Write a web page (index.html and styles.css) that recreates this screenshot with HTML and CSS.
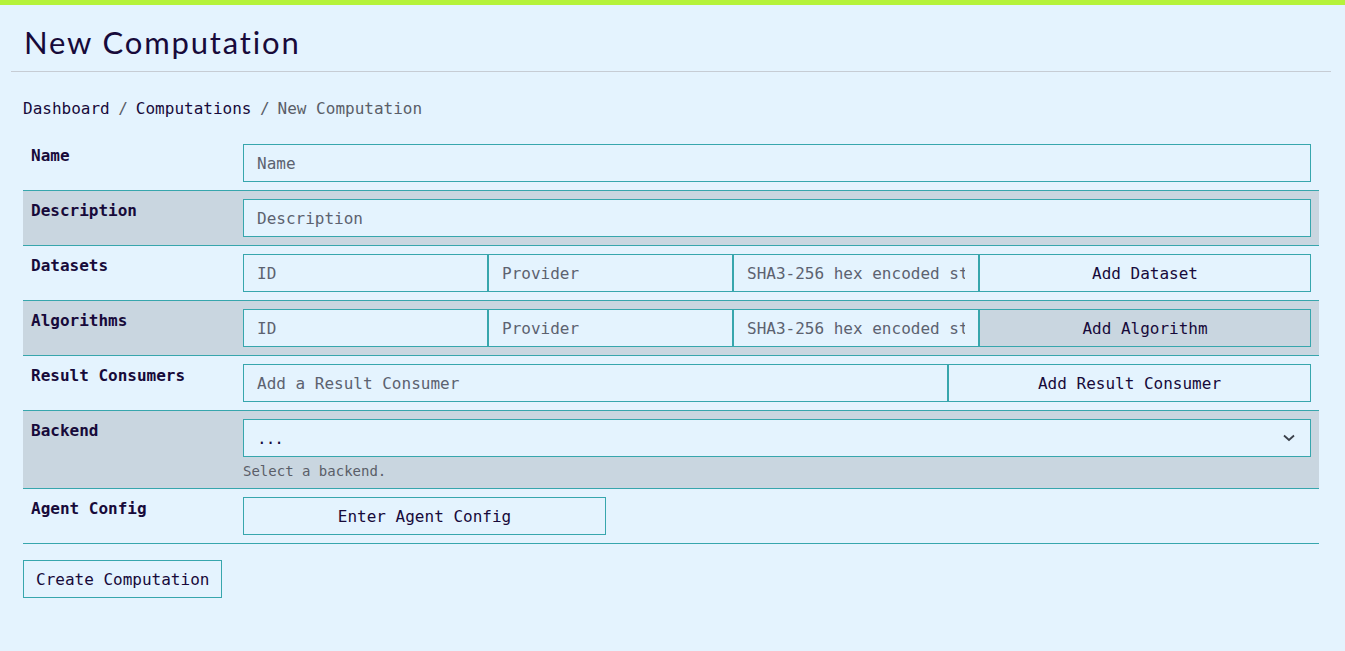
FILE: index.html
```html
<!DOCTYPE html>
<html lang="en">
<head>
<meta charset="utf-8">
<title>New Computation</title>
<link rel="stylesheet" href="styles.css">
</head>
<body>
<div class="topbar"></div>
<header class="page-header">
  <h1 class="title">New Computation</h1>
</header>
<main class="content">
  <nav class="breadcrumb">
    <a class="crumb" href="#">Dashboard</a><span class="sep">/</span><a class="crumb" href="#">Computations</a><span class="sep">/</span><span class="crumb current">New Computation</span>
  </nav>
  <form class="form">
    <div class="row">
      <label class="label">Name</label>
      <div class="field"><input class="input" placeholder="Name"></div>
    </div>
    <div class="row alt">
      <label class="label">Description</label>
      <div class="field"><input class="input" placeholder="Description"></div>
    </div>
    <div class="row">
      <label class="label">Datasets</label>
      <div class="field group-4">
        <input class="input" placeholder="ID">
        <input class="input" placeholder="Provider">
        <input class="input" placeholder="SHA3-256 hex encoded string">
        <button type="button" class="btn">Add Dataset</button>
      </div>
    </div>
    <div class="row alt">
      <label class="label">Algorithms</label>
      <div class="field group-4">
        <input class="input" placeholder="ID">
        <input class="input" placeholder="Provider">
        <input class="input" placeholder="SHA3-256 hex encoded string">
        <button type="button" class="btn">Add Algorithm</button>
      </div>
    </div>
    <div class="row">
      <label class="label">Result Consumers</label>
      <div class="field group-2">
        <input class="input" placeholder="Add a Result Consumer">
        <button type="button" class="btn">Add Result Consumer</button>
      </div>
    </div>
    <div class="row alt">
      <label class="label">Backend</label>
      <div class="field">
        <div class="select">
          <span class="select-value">...</span>
          <svg class="chevron" width="12" height="8" viewBox="0 0 12 8"><path d="M1 1.5 L6 6 L11 1.5" fill="none" stroke="#3a3f4a" stroke-width="1.8"/></svg>
        </div>
        <div class="help">Select a backend.</div>
      </div>
    </div>
    <div class="row">
      <label class="label">Agent Config</label>
      <div class="field"><button type="button" class="btn btn-wide">Enter Agent Config</button></div>
    </div>
  </form>
  <button type="button" class="btn btn-submit">Create Computation</button>
</main>
</body>
</html>
```
FILE: styles.css
```css
* { box-sizing: border-box; }
html, body { margin: 0; padding: 0; }
body {
  background: #e4f3fe;
  color: #170a3a;
  font-family: "DejaVu Sans Mono", "Liberation Mono", monospace;
  font-size: 16px;
}
.topbar { height: 5px; background: #b5f23a; }
.page-header {
  margin: 0 14px 0 11px;
  border-bottom: 1px solid #c6ccd4;
  height: 67px;
  display: flex;
  align-items: center;
  padding-left: 13px;
}
.title {
  margin: 0;
  font-family: "Lato", "Open Sans", sans-serif;
  font-weight: 400;
  font-size: 31px;
  letter-spacing: 1.85px;
  color: #170a3a;
  padding-top: 7px;
}
.content { padding: 0 26px 0 23px; }
.breadcrumb {
  padding-top: 26px;
  height: 64px;
  line-height: 22px;
  font-size: 16px;
}
.crumb { color: #170a3a; text-decoration: none; }
.crumb.current { color: #5a5e68; }
.sep { color: #5a5e68; padding: 0 8px 0 8.5px; }
.form { display: flex; flex-direction: column; }
.row {
  display: grid;
  grid-template-columns: 212px 1fr;
  padding: 8px;
  border-bottom: 1px solid #37a6ad;
}
.row.alt { background: #c9d6e0; }
.label {
  font-weight: 700;
  line-height: 22px;
  padding-top: 1px;
  font-size: 16px;
}
.field { display: flex; flex-direction: column; min-width: 0; }
.group-4 { display: grid; grid-template-columns: 245px 245px 246px 1fr; }
.group-2 { display: grid; grid-template-columns: 705px 1fr; }
.input {
  height: 38px;
  border: 1px solid #37a6ad;
  background: #e4f3fe;
  color: #170a3a;
  font-family: inherit;
  font-size: 16px;
  padding: 0 13px;
  min-width: 0;
  outline: none;
}
.input::placeholder { color: #5c6270; }
.btn {
  height: 38px;
  border: 1px solid #37a6ad;
  background: transparent;
  color: #170a3a;
  font-family: inherit;
  font-size: 16px;
  padding: 0 12px;
  cursor: pointer;
}
.btn-wide { width: 363px; }
.select {
  height: 38px;
  border: 1px solid #37a6ad;
  background: #e4f3fe;
  display: flex;
  align-items: center;
  justify-content: space-between;
  padding: 0 15px 0 13px;
}
.select-value { color: #170a3a; letter-spacing: -1px; }
.chevron { display: block; }
.help {
  font-size: 14px;
  color: #5a5e68;
  margin-top: 5px;
  line-height: 18px;
  padding-bottom: 0;
}
.btn-submit { margin-top: 16px; }
```
